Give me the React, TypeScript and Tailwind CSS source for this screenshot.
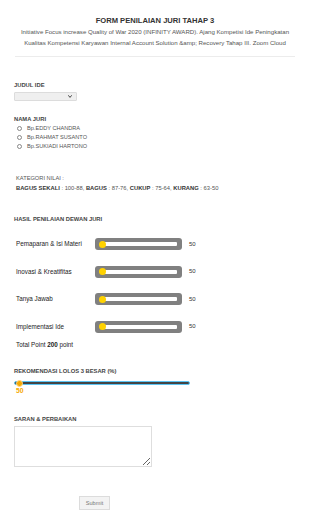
import React from "react";

function Slider({ label }: { label: string }) {
  return (
    <div className="flex items-center h-[12px]">
      <div className="w-[81px] pl-[2px] text-[6.3px] text-[#222]">{label}</div>
      <div className="relative w-[87px] h-[12px] rounded-[3px] bg-[#808080] flex items-center px-[5px]">
        <div className="w-full h-[4px] bg-white rounded-[1px]" />
        <div className="absolute left-[4px] top-[2.5px] w-[7px] h-[7px] rounded-full bg-[#ffd200]" />
      </div>
      <div className="ml-[7px] text-[6px] text-[#333]">50</div>
    </div>
  );
}

export default function App() {
  return (
    <div className="w-[310px] min-h-[518px] bg-white font-['Liberation_Sans',Arial,sans-serif] text-[#333]">
      <div className="pt-[15.5px] text-center">
        <h1 className="text-[7.6px] leading-[9px] font-bold text-[#333]">FORM PENILAIAN JURI TAHAP 3</h1>
        <p className="mt-[1px] px-[10px] text-[6.1px] leading-[11px] text-[#555]">
          Initiative Focus increase Quality of War 2020 (INFINITY AWARD). Ajang Kompetisi Ide Peningkatan
          <br />
          Kualitas Kompetensi Karyawan Internal Account Solution &amp;amp; Recovery Tahap III. Zoom Cloud
        </p>
      </div>
      <div className="mx-[15px] mt-[8.5px] border-t border-[#ececec]" />

      <div className="px-[14px]">
        <div className="mt-[24.5px] text-[5.8px] leading-[7px] font-bold text-[#444]">JUDUL IDE</div>
        <div className="mt-[3.5px] w-[63px] h-[9px] bg-[#efefef] border border-[#dcdcdc] rounded-[1px] flex items-center justify-end pr-[4px]">
          <svg width="4" height="3" viewBox="0 0 4 3">
            <path d="M0.3 0.3 L2 2.4 L3.7 0.3" fill="none" stroke="#333" strokeWidth="0.9" />
          </svg>
        </div>

        <div className="mt-[14.5px] text-[5.8px] leading-[7px] font-bold text-[#444]">NAMA JURI</div>
        <div className="mt-[1px] flex flex-col">
          {["Bp.EDDY CHANDRA", "Bp.RAHMAT SUSANTO", "Bp.SUKIADI HARTONO"].map((n) => (
            <div key={n} className="flex items-center h-[9px]">
              <div className="ml-[3px] w-[5px] h-[5px] rounded-full border-[0.6px] border-[#888] bg-white" />
              <span className="ml-[5px] text-[5.6px] text-[#555]">{n}</span>
            </div>
          ))}
        </div>

        <div className="mt-[24px] pl-[2px] text-[5.7px] leading-[7px] text-[#555]">KATEGORI NILAI :</div>
        <div className="mt-[3px] pl-[2px] text-[5.8px] leading-[7px] text-[#555]">
          <b className="text-[#333]">BAGUS SEKALI</b> : 100-88, <b className="text-[#333]">BAGUS</b> : 87-76,{" "}
          <b className="text-[#333]">CUKUP</b> : 75-64, <b className="text-[#333]">KURANG</b> : 63-50
        </div>

        <div className="mt-[24px] text-[5.8px] leading-[7px] font-bold text-[#444]">HASIL PENILAIAN DEWAN JURI</div>
        <div className="mt-[15.5px] flex flex-col gap-[15.5px]">
          <Slider label="Pemaparan & Isi Materi" />
          <Slider label="Inovasi & Kreatifitas" />
          <Slider label="Tanya Jawab" />
          <Slider label="Implementasi Ide" />
        </div>
        <div className="mt-[8px] pl-[2px] text-[6.3px] leading-[8px] text-[#222]">
          Total Point <b>200</b> point
        </div>

        <div className="mt-[19px] text-[5.8px] leading-[7px] font-bold text-[#444]">REKOMENDASI LOLOS 3 BESAR (%)</div>
        <div className="relative mt-[5px] w-[176px] h-[7px] flex items-center">
          <div className="w-full h-[4px] bg-[#444] border-[0.8px] border-[#5cc4f2] rounded-[2px]" />
          <div className="absolute left-[1.5px] top-0 w-[7px] h-[7px] rounded-full bg-[#f5a800] border-[0.7px] border-[#ffd98a]" />
        </div>
        <div className="mt-[0px] pl-[2px] text-[6.8px] leading-[8px] font-bold text-[#f5a800]">50</div>

        <div className="mt-[21px] text-[5.8px] leading-[7px] font-bold text-[#444]">SARAN &amp; PERBAIKAN</div>
        <textarea className="mt-[3.5px] block w-[138px] h-[41px] border border-[#dedede] bg-white resize" />

        <div className="mt-[21px] pl-[65px]">
          <button className="w-[31px] h-[14px] bg-[#f3f3f3] border border-[#dcdcdc] text-[5.6px] text-[#777]">Submit</button>
        </div>
      </div>
    </div>
  );
}
